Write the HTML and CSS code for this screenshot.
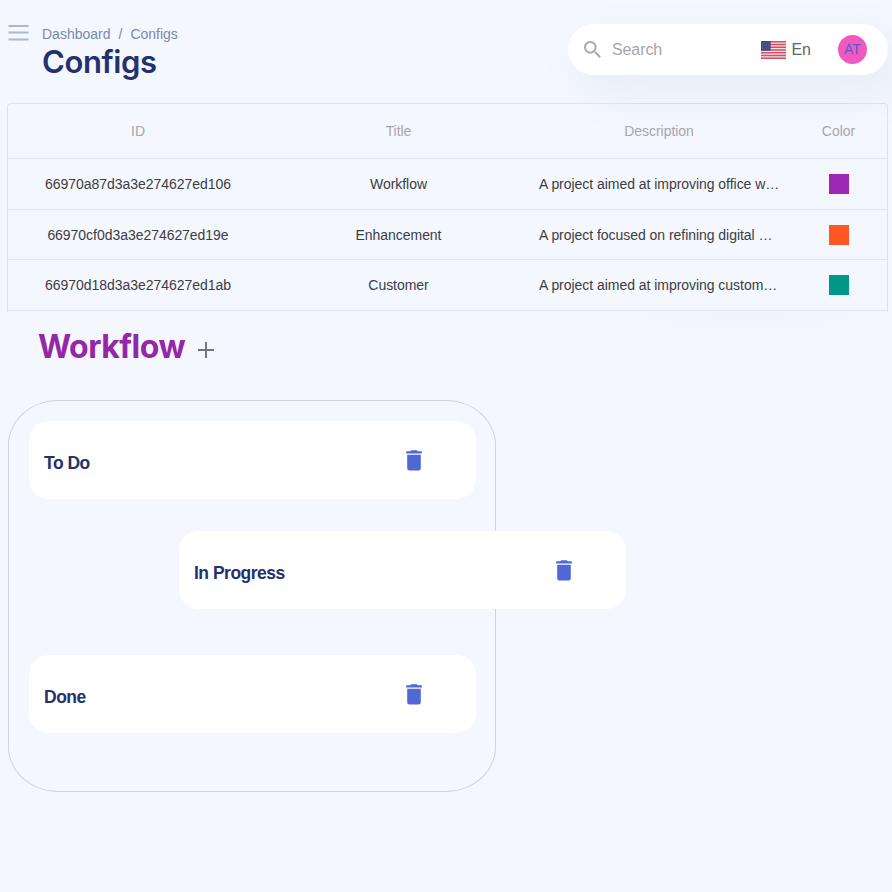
FILE: index.html
```html
<!DOCTYPE html>
<html lang="en">
<head>
<meta charset="utf-8">
<title>Configs</title>
<link rel="stylesheet" href="styles.css">
</head>
<body>
<svg class="sprite" width="0" height="0" aria-hidden="true">
  <symbol id="trash" viewBox="0 0 16 21">
    <path d="M1.2 4.8h13.6v13.4a2.2 2.2 0 0 1-2.2 2.2H3.4a2.2 2.2 0 0 1-2.2-2.2zM.2 1.2h4L5.3.2h5.4l1.1 1h4v2.400H.2z"/>
  </symbol>
</svg>
<header class="header">
  <svg class="menu" viewBox="0 0 20 16"><path d="M0 1h20M0 7.6h20M0 14.6h20"/></svg>
  <div class="heading">
    <nav class="crumbs"><span>Dashboard</span><span class="sep">/</span><span>Configs</span></nav>
    <h1 class="title">Configs</h1>
  </div>
  <div class="toolbar">
    <svg class="search-icon" viewBox="3 3 17.5 17.5"><path d="M15.5 14h-.79l-.28-.27A6.47 6.47 0 0 0 16 9.5 6.5 6.5 0 1 0 9.500 16c1.610 0 3.090-.59 4.230-1.570l.27.28v.79l5 4.990L20.490 19zm-6 0C7.010 14 5 11.990 5 9.500S7.010 5 9.500 5 14 7.010 14 9.500 11.990 14 9.500 14z"/></svg>
    <span class="search">Search</span>
    <svg class="flag" viewBox="0 0 24 18" preserveAspectRatio="none">
      <rect width="24" height="18" fill="#f4dfe5"/>
      <path d="M0 .7h24M0 3.500h24M0 6.200h24M0 9h24M0 11.800h24M0 14.500h24M0 17.300h24" stroke="#ce5263" stroke-width="1.400"/>
      <rect width="9.300" height="9.700" fill="#46467f"/>
      <path d="M1 2h8M1 4.500h8M1 7h8" stroke="#7c7ca8" stroke-width=".7" stroke-dasharray="1 1"/>
    </svg>
    <span class="lang">En</span>
    <span class="avatar">AT</span>
  </div>
</header>
<main>
  <section class="table">
    <div class="row head"><span>ID</span><span>Title</span><span>Description</span><span>Color</span></div>
    <div class="row"><span>66970a87d3a3e274627ed106</span><span>Workflow</span><span class="desc">A project aimed at improving office w…</span><span><i class="swatch purple"></i></span></div>
    <div class="row"><span>66970cf0d3a3e274627ed19e</span><span>Enhancement</span><span class="desc">A project focused on refining digital …</span><span><i class="swatch orange"></i></span></div>
    <div class="row"><span>66970d18d3a3e274627ed1ab</span><span>Customer</span><span class="desc">A project aimed at improving custom…</span><span><i class="swatch teal"></i></span></div>
  </section>
  <div class="group">
    <h2 class="group-title">Workflow</h2>
    <svg class="plus" viewBox="0 0 16 16"><path d="M8 0v16M0 8h16"/></svg>
  </div>
  <section class="board">
    <article class="card"><span>To Do</span><svg class="trash"><use href="#trash"/></svg></article>
    <article class="card dragging"><span>In Progress</span><svg class="trash"><use href="#trash"/></svg></article>
    <article class="card"><span>Done</span><svg class="trash"><use href="#trash"/></svg></article>
  </section>
</main>
</body>
</html>
```
FILE: styles.css
```css
* { box-sizing: border-box; }
body { margin: 0; height: 892px; overflow: hidden; background: #f4f7fe; font-family: "Liberation Sans", Arial, sans-serif; color: #333; }
.sprite { position: absolute; }
.header { height: 103px; padding: 24px 4px 0 8px; display: flex; align-items: flex-start; }
.menu { width: 21px; height: 16px; margin-top: 1px; stroke: #adb4d4; stroke-width: 2; fill: none; }
.heading { margin-left: 13px; }
.crumbs { display: flex; font-size: 14px; line-height: 20px; color: #7c88ad; }
.sep { margin: 0 8px; }
.title { margin: 1px 0 0; font: 600 31px/34px Inter, sans-serif; letter-spacing: -0.4px; color: #25316f; }
.toolbar { margin-left: auto; width: 320px; height: 51px; padding: 0 21px 0 16px; border-radius: 26px; background: #fff; display: flex; align-items: center; box-shadow: 14px 17px 40px 4px rgba(112, 144, 200, 0.09); }
.search-icon { width: 17px; height: 17px; fill: #aaa; }
.search { margin-left: 11px; font-size: 16px; letter-spacing: -0.1px; color: #a6a6a6; }
.flag { width: 25px; height: 18px; margin-left: auto; }
.lang { margin-left: 5px; font-size: 16px; color: #666; }
.avatar { margin-left: 27px; width: 29px; height: 29px; border-radius: 50%; background: #f05ac0; color: #5a5cc9; font-size: 14px; line-height: 29px; text-align: center; }
.table { margin: 0 4px 0 7px; height: 209px; border: 1px solid #e0e2e9; border-bottom: 0; border-radius: 4px 4px 0 0; }
.row { display: grid; grid-template-columns: 260px 261px 260px 99px; align-items: center; height: 50.700px; border-bottom: 1px solid #e0e2e9; font-size: 14px; letter-spacing: -0.04px; text-align: center; color: #3c3d42; }
.head { height: 55px; color: #a9a5aa; }
.desc { text-align: left; padding-left: 10px; white-space: nowrap; }
.swatch { display: block; width: 20px; height: 20px; margin: 0 auto; }
.purple { background: #9c27b0; }
.orange { background: #ff5722; }
.teal { background: #009688; }
.group { height: 88px; padding: 11px 0 0 38px; display: flex; align-items: flex-start; background: radial-gradient(ellipse 190px 36px at 750px 0, rgba(112, 144, 200, 0.03), transparent); }
.group-title { margin: 0; width: 147px; white-space: nowrap; font: 700 32px/48px Inter, sans-serif; letter-spacing: -0.5px; color: #9426a8; }
.plus { width: 16px; height: 16px; margin: 19px 0 0 13px; stroke: #747579; stroke-width: 2; }
.board { margin-left: 8px; width: 488px; height: 392px; padding: 20px; border: 1px solid #ced3e6; border-radius: 50px / 45px; display: flex; flex-direction: column; }
.card { width: 447px; height: 78px; flex: none; padding: 7px 54px 0 15px; border-radius: 20px; background: #fff; display: flex; align-items: center; justify-content: space-between; font-size: 17.500px; font-weight: 700; letter-spacing: -0.5px; color: #25306c; }
.dragging { margin: 32px 0 46px 150px; }
.trash { width: 16px; height: 21px; margin-top: -6px; fill: #5068d5; }
```
